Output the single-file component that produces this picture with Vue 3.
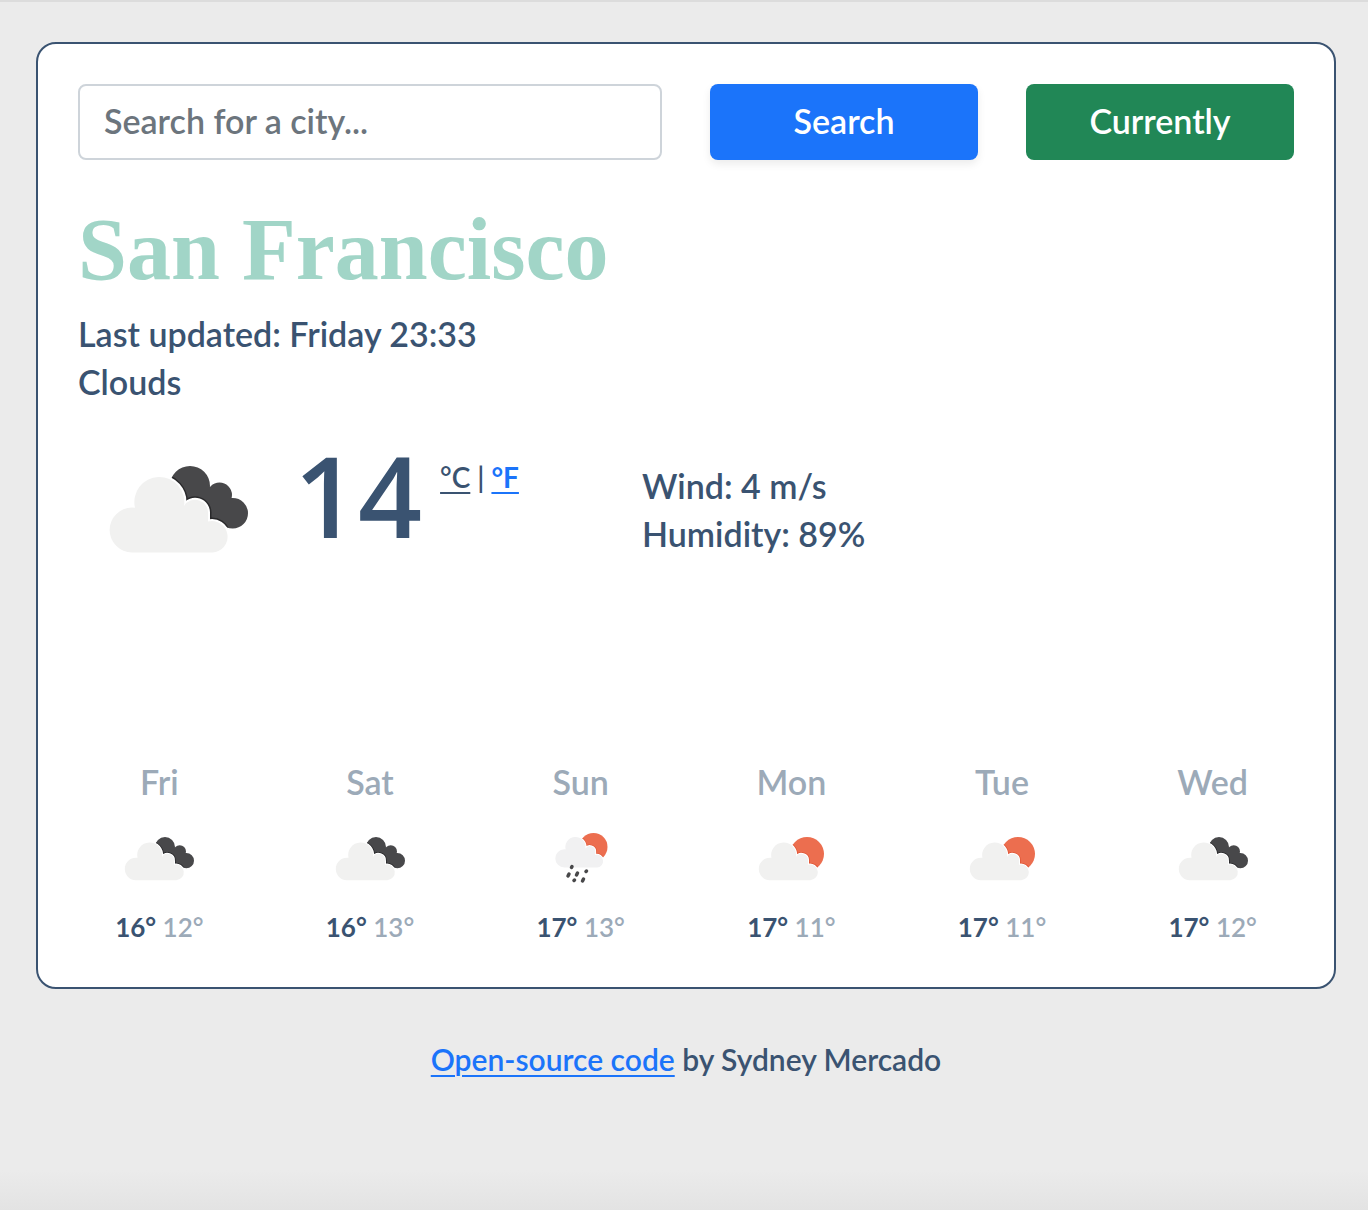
<script setup>
import { ref } from 'vue'

const city = ref('')

const forecast = [
  { day: 'Fri', icon: 'clouds', max: 16, min: 12 },
  { day: 'Sat', icon: 'clouds', max: 16, min: 13 },
  { day: 'Sun', icon: 'rain', max: 17, min: 13 },
  { day: 'Mon', icon: 'sun', max: 17, min: 11 },
  { day: 'Tue', icon: 'sun', max: 17, min: 11 },
  { day: 'Wed', icon: 'clouds', max: 17, min: 12 },
]
</script>

<template>
  <div class="page">
    <svg class="sprite" aria-hidden="true">
      <defs>
        <path
          id="cloud"
          d="M54 144.400A22.400 22.400 0 0 1 54 99.600L57 99.700A25 25 0 1 1 106 98A13 13 0 0 1 130 106V113.500A15.700 15.700 0 1 1 134.500 144.400Z"
        />
        <path
          id="dark-shape"
          d="M92 78a20 20 0 1 1 40 0a20 20 0 1 1-40 0ZM129 87a12.500 12.500 0 1 1 25 0a12.500 12.500 0 1 1-25 0ZM139.400 105.300a15.300 15.300 0 1 1 30.600 0a15.300 15.300 0 1 1-30.600 0ZM112 92L141 84L150 119L112 112Z"
        />
        <clipPath id="dark-clip"><use href="#dark-shape" /></clipPath>
        <clipPath id="sun-clip"><circle cx="132" cy="92" r="34" /></clipPath>
        <clipPath id="rain-clip"><circle cx="125" cy="78" r="28" /></clipPath>
      </defs>
      <symbol id="clouds" viewBox="0 0 200 200">
        <use href="#dark-shape" fill="#48484a" />
        <g clip-path="url(#dark-clip)">
          <use href="#cloud" fill="none" stroke="#29292b" stroke-width="7" />
        </g>
        <use href="#cloud" fill="#fff" stroke="#fff" stroke-width="4" />
        <use href="#cloud" fill="#f1f1f0" />
      </symbol>
      <symbol id="sun" viewBox="0 0 200 200">
        <circle cx="132" cy="92" r="34" fill="#ec6e4f" />
        <g clip-path="url(#sun-clip)">
          <use href="#cloud" x="4" fill="none" stroke="#e05636" stroke-width="7" />
        </g>
        <use href="#cloud" x="4" fill="#fff" stroke="#fff" stroke-width="4" />
        <use href="#cloud" x="4" fill="#f1f1f0" />
      </symbol>
      <symbol id="rain" viewBox="0 0 200 200">
        <circle cx="125" cy="78" r="28" fill="#ec6e4f" />
        <g clip-path="url(#rain-clip)">
          <use href="#cloud" transform="translate(23 2) scale(.81)" fill="none" stroke="#e05636" stroke-width="8" />
        </g>
        <g transform="translate(23 2) scale(.81)">
          <use href="#cloud" fill="#fff" stroke="#fff" stroke-width="5" />
          <use href="#cloud" fill="#f1f1f2" />
        </g>
        <path
          d="M82 117l-1 2M76 132l-2 4M93 130l-2 4M111 126l-1 1M87 144l-1 1M105 142l-2 4"
          fill="none"
          stroke="#48484a"
          stroke-width="7"
          stroke-linecap="round"
        />
      </symbol>
    </svg>

    <main class="card">
      <form class="search" @submit.prevent>
        <input v-model="city" class="field" type="text" placeholder="Search for a city..." aria-label="City" />
        <button class="btn primary" type="submit">Search</button>
        <button class="btn success" type="button">Currently</button>
      </form>

      <h1 class="city">San Francisco</h1>
      <ul class="overview">
        <li>Last updated: Friday 23:33</li>
        <li>Clouds</li>
      </ul>

      <section class="current">
        <div class="now">
          <svg class="icon-large" role="img" aria-label="Clouds"><use href="#clouds" /></svg>
          <strong class="degrees">14</strong>
          <span class="units"><a class="active" href="#">°C</a> | <a href="#">°F</a></span>
        </div>
        <ul class="details">
          <li>Wind: 4 m/s</li>
          <li>Humidity: 89%</li>
        </ul>
      </section>

      <section class="forecast">
        <div v-for="item in forecast" :key="item.day" class="day">
          <div class="name">{{ item.day }}</div>
          <svg class="icon" aria-hidden="true"><use :href="'#' + item.icon" /></svg>
          <div class="temps">
            <span class="max">{{ item.max }}°</span> <span class="min">{{ item.min }}°</span>
          </div>
        </div>
      </section>
    </main>

    <footer class="credit"><a href="#">Open-source code</a> by Sydney Mercado</footer>
  </div>
</template>

<style>
body {
  background: #ebebeb;
}
</style>

<style scoped>
.page {
  box-sizing: border-box;
  min-height: 100vh;
  padding: 40px 32px 0 36px;
  border-top: 2px solid #dcdcdc;
  background: linear-gradient(to top, #e3e3e3, #ebebeb 40px);
  color: #3a5371;
  font-family: Lato, "Open Sans", sans-serif;
  font-size: 34px;
  font-weight: 600;
  line-height: 48px;
}

.sprite {
  position: absolute;
  width: 0;
  height: 0;
}

.card {
  padding: 40px;
  border: 2px solid #3a5371;
  border-radius: 20px;
  background: #fff;
}

.search {
  display: grid;
  grid-template-columns: repeat(12, 1fr);
  gap: 48px;
}

.field,
.btn {
  box-sizing: border-box;
  min-width: 0;
  height: 76px;
  border-radius: 8px;
  font: inherit;
}

.field {
  grid-column: span 6;
  padding: 0 24px 4px;
  border: 2px solid #ced4da;
  background: #fff;
  color: #212529;
}

.field::placeholder {
  color: #6c757d;
  opacity: 1;
}

.btn {
  grid-column: span 3;
  padding: 0 0 2px;
  border: 0;
  color: #fff;
}

.primary {
  background: #1b74fa;
  box-shadow: 0 4px 8px rgba(0, 0, 0, 0.08);
}

.success {
  background: #218756;
}

.city {
  margin: 42px 0 12px;
  color: #a1d5c7;
  font-family: "Liberation Serif", serif;
  font-size: 88px;
  font-weight: 700;
  line-height: 96px;
}

.overview,
.details {
  margin: 0;
  padding: 0;
  list-style: none;
}

.current {
  display: grid;
  grid-template-columns: 564fr 652fr;
  margin-top: 2px;
}

.now {
  display: flex;
  align-items: flex-start;
}

.icon-large {
  flex: none;
  width: 200px;
  height: 200px;
}

.degrees {
  margin: 31px 18px 0 16px;
  font-family: "Open Sans", sans-serif;
  font-size: 112px;
  font-weight: 600;
  line-height: 112px;
}

.units {
  margin-top: 45px;
  font-size: 28px;
  white-space: nowrap;
}

.units a {
  font-weight: 700;
}

a {
  color: #1b74fa;
  text-decoration-thickness: 2px;
  text-underline-offset: 4px;
}

.units .active {
  color: #3a5371;
  font-weight: 600;
}

.details {
  padding-top: 54px;
}

.forecast {
  display: grid;
  grid-template-columns: repeat(6, 1fr);
  gap: 48px;
  margin-top: 150px;
  text-align: center;
}

.name,
.min {
  color: #9caab8;
}

.icon {
  display: block;
  width: 100px;
  height: 100px;
  margin: 2px auto 0;
}

.temps {
  line-height: 39px;
  font-size: 26px;
}

.max {
  font-weight: 700;
}

.credit {
  margin-top: 46px;
  font-size: 30px;
  text-align: center;
}
</style>
